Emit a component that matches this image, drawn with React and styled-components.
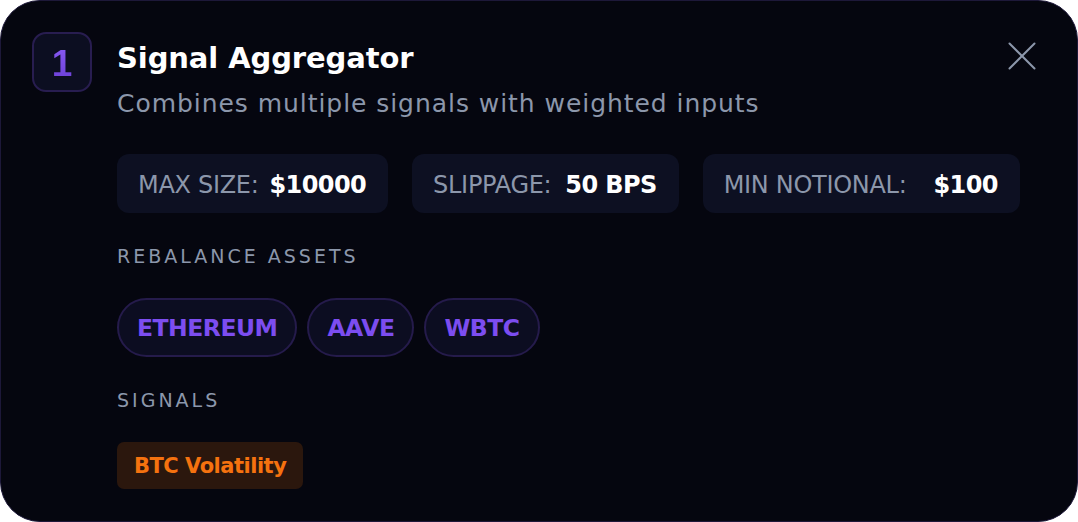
import React from 'react';
import styled, { createGlobalStyle } from 'styled-components';

const GlobalStyle = createGlobalStyle`
  html, body {
    margin: 0;
    padding: 0;
    background: #ffffff;
  }
  * {
    box-sizing: border-box;
  }
`;

const Card = styled.div`
  width: 1078px;
  height: 522px;
  background: #05060f;
  border: 1px solid #1d1839;
  border-radius: 40px;
  padding: 31px 35px 31px 31px;
  display: grid;
  grid-template-columns: 60px 1fr;
  grid-template-rows: min-content;
  column-gap: 25px;
  font-family: 'DejaVu Sans', 'Noto Sans', sans-serif;
`;

const NumberBox = styled.div`
  width: 60px;
  height: 60px;
  border-radius: 14px;
  border: 2px solid #281d50;
  background: #0c0e21;
  display: flex;
  align-items: center;
  justify-content: center;
  font-family: 'Liberation Sans', Arial, sans-serif;
  font-size: 37px;
  font-weight: 700;
  line-height: 1;
`;

const Digit = styled.span`
  background: linear-gradient(180deg, #8b5cf6 0%, #6b3fd6 100%);
  -webkit-background-clip: text;
  -webkit-text-fill-color: transparent;
  background-clip: text;
  padding-top: 2px;
`;

const Content = styled.div`
  display: flex;
  flex-direction: column;
  align-items: flex-start;
`;

const HeaderRow = styled.div`
  align-self: stretch;
  display: flex;
  justify-content: space-between;
  align-items: flex-start;
`;

const Title = styled.h2`
  margin: 8px 0 0;
  font-size: 29px;
  line-height: 36px;
  font-weight: 700;
  color: #ffffff;
  letter-spacing: -0.1px;
`;

const CloseButton = styled.button`
  width: 40px;
  height: 40px;
  margin-top: 4px;
  padding: 0;
  border: none;
  background: transparent;
  display: flex;
  align-items: center;
  justify-content: center;
  cursor: pointer;
`;

const Subtitle = styled.p`
  margin: 12px 0 0;
  font-size: 25px;
  line-height: 32px;
  letter-spacing: 0.95px;
  color: #8c97ab;
  font-weight: 400;
`;

const Stats = styled.div`
  display: flex;
  gap: 24px;
  margin-top: 34px;
`;

const Stat = styled.div`
  height: 59px;
  padding: 2px 22px 0 21px;
  border-radius: 12px;
  background: #0d1022;
  display: flex;
  align-items: center;
  gap: ${p => p.$gap}px;
  font-size: 24px;
  line-height: 28px;
`;

const StatLabel = styled.span`
  color: #8c97ab;
  font-weight: 400;
  letter-spacing: -0.3px;
`;

const StatValue = styled.span`
  color: #ffffff;
  font-weight: 700;
  letter-spacing: -0.6px;
`;

const SectionLabel = styled.div`
  margin-top: 31px;
  font-size: 19px;
  line-height: 24px;
  letter-spacing: 3px;
  color: #8c97ab;
  font-weight: 400;
`;

const Chips = styled.div`
  display: flex;
  gap: 10px;
  margin-top: 30px;
`;

const Chip = styled.div`
  height: 59px;
  padding: 1px 18px 0;
  border-radius: 30px;
  border: 2px solid #251b4b;
  background: #0c0d21;
  display: flex;
  align-items: center;
  font-size: 23.5px;
  line-height: 28px;
  letter-spacing: -0.5px;
  font-weight: 700;
  color: #7c4df0;
`;

const Tag = styled.div`
  margin-top: 30px;
  height: 47px;
  padding: 1px 17px 0;
  border-radius: 7px;
  background: #2b170d;
  display: flex;
  align-items: center;
  font-size: 21px;
  line-height: 26px;
  letter-spacing: -0.5px;
  font-weight: 700;
  color: #f5720f;
`;

const stats = [
  { label: 'MAX SIZE:', value: '$10000', gap: 11 },
  { label: 'SLIPPAGE:', value: '50 BPS', gap: 14 },
  { label: 'MIN NOTIONAL:', value: '$100', gap: 27 },
];

const assets = ['ETHEREUM', 'AAVE', 'WBTC'];

const App = () => (
  <>
    <GlobalStyle />
    <Card>
      <NumberBox>
        <Digit>1</Digit>
      </NumberBox>
      <Content>
        <HeaderRow>
          <Title>Signal Aggregator</Title>
          <CloseButton aria-label="Close">
            <svg width="28" height="28" viewBox="0 0 28 28" fill="none">
              <path d="M1.5 1.5L26.5 26.5M26.5 1.5L1.5 26.5" stroke="#8c97ab" strokeWidth="2" strokeLinecap="round" />
            </svg>
          </CloseButton>
        </HeaderRow>
        <Subtitle>Combines multiple signals with weighted inputs</Subtitle>
        <Stats>
          {stats.map(s => (
            <Stat key={s.label} $gap={s.gap}>
              <StatLabel>{s.label}</StatLabel>
              <StatValue>{s.value}</StatValue>
            </Stat>
          ))}
        </Stats>
        <SectionLabel>REBALANCE ASSETS</SectionLabel>
        <Chips>
          {assets.map(a => (
            <Chip key={a}>{a}</Chip>
          ))}
        </Chips>
        <SectionLabel>SIGNALS</SectionLabel>
        <Tag>BTC Volatility</Tag>
      </Content>
    </Card>
  </>
);

export default App;
